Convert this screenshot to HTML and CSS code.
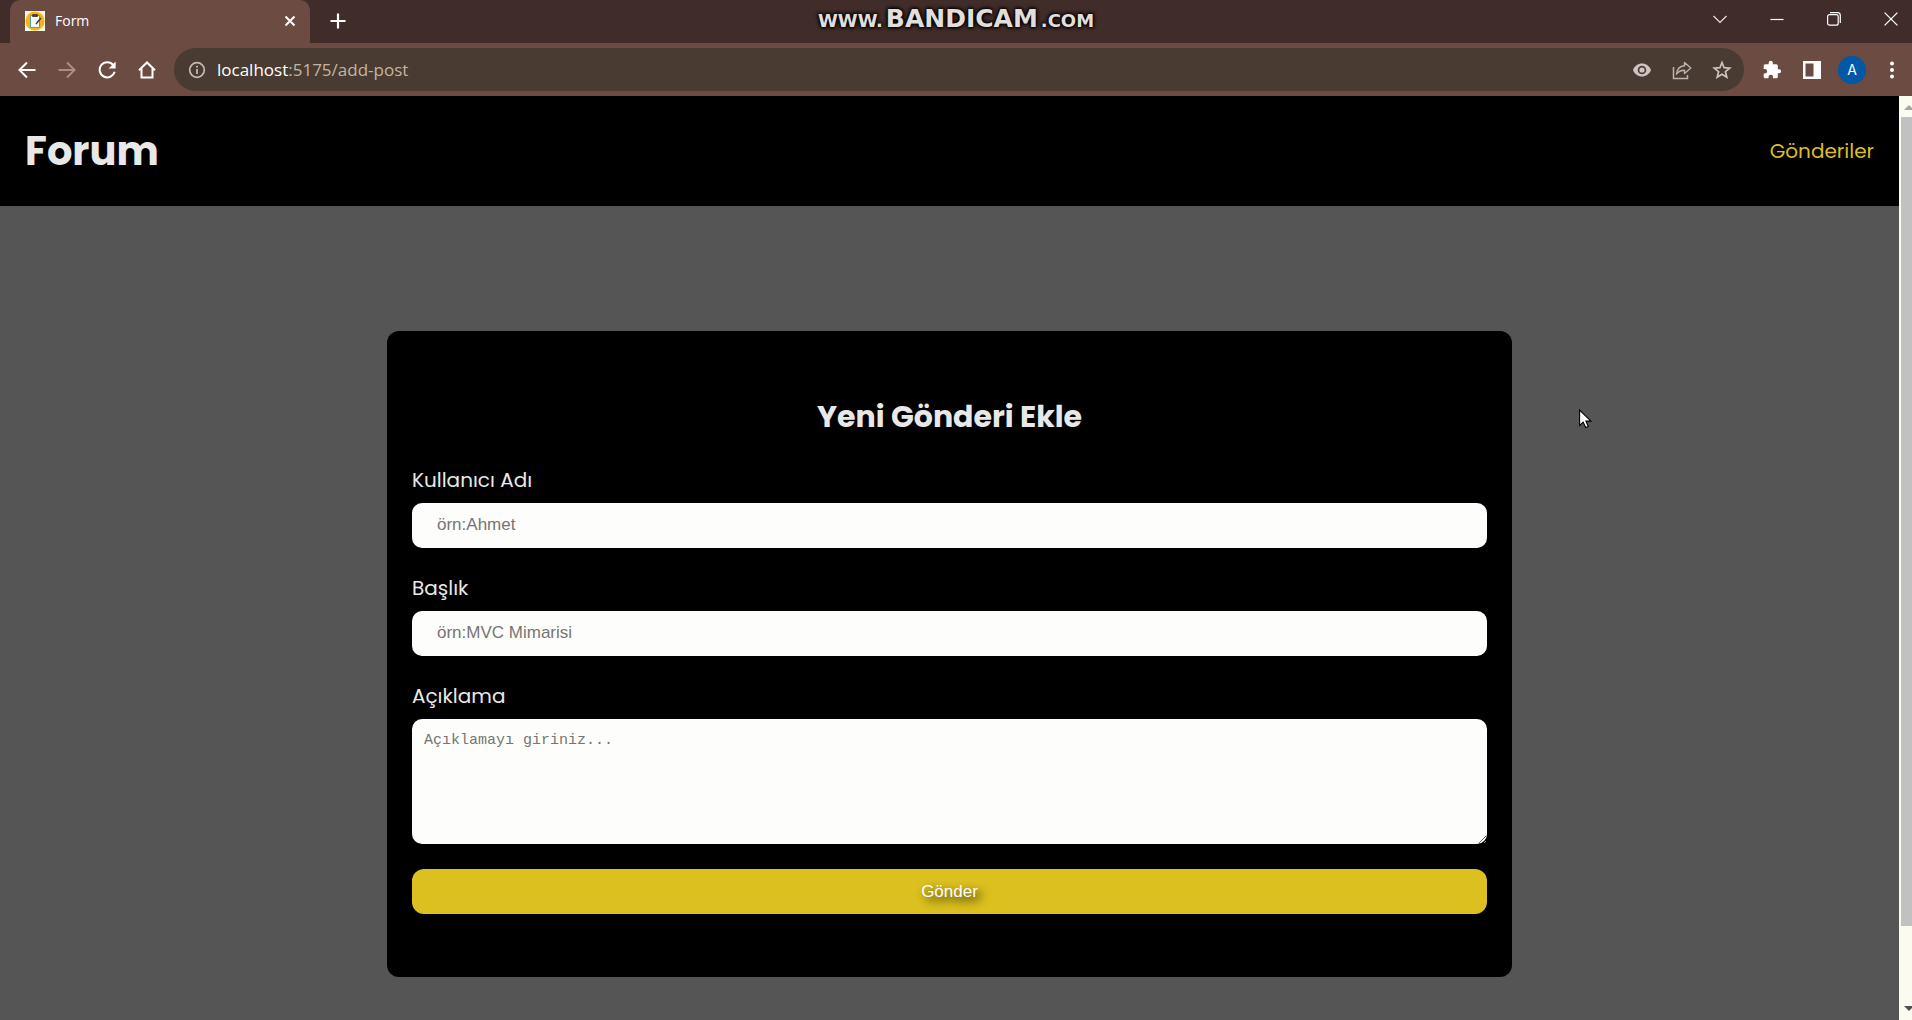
FILE: index.html
```html
<!DOCTYPE html>
<html lang="tr">
<head>
<meta charset="utf-8">
<meta name="viewport" content="width=device-width, initial-scale=1">
<title>Form</title>
<link rel="stylesheet" href="styles.css">
</head>
<body>
<div class="browser">
  <div class="tab-strip">
    <div class="tab">
      <svg class="favicon" width="20" height="20" viewBox="0 0 20 20" aria-hidden="true">
        <rect width="20" height="20" fill="#fff8e6"/>
        <circle cx="10" cy="10" r="9.6" fill="#f8b414"/>
        <rect x="5" y="4" width="10" height="13" rx="1" fill="#56a59a"/>
        <rect x="6" y="5" width="8" height="11" fill="#f4fbff"/>
        <rect x="7" y="3" width="6" height="3" rx="1" fill="#494637"/>
        <path d="M11 13l5-6" stroke="#3c4548" stroke-width="1.5"/>
      </svg>
      <span class="tab-title">Form</span>
      <button class="icon-button tab-close" type="button" aria-label="Sekmeyi kapat">
        <svg width="12" height="12" viewBox="0 0 12 12"><path d="M1.5 1.5l9 9M10.5 1.5l-9 9" stroke="#fff" stroke-width="2"/></svg>
      </button>
    </div>
    <button class="icon-button new-tab" type="button" aria-label="Yeni sekme">
      <svg width="16" height="16" viewBox="0 0 16 16"><path d="M8 .5v15M.5 8h15" stroke="#fff" stroke-width="2.2"/></svg>
    </button>
    <div class="watermark" lang="en"><small>www.</small><strong>Bandicam</strong><small>.com</small></div>
    <div class="window-controls">
      <button class="icon-button" type="button" aria-label="Sekme ara"><svg width="14" height="14" viewBox="0 0 14 14"><path d="M.5 4L7 10.5 13.500 4" fill="none" stroke="#eee3df" stroke-width="1.2"/></svg></button>
      <button class="icon-button" type="button" aria-label="Simge durumu"><svg width="14" height="14" viewBox="0 0 14 14"><path d="M.5 7.5h13" stroke="#fff" stroke-width="1.2"/></svg></button>
      <button class="icon-button" type="button" aria-label="Geri yükle"><svg width="14" height="14" viewBox="0 0 14 14"><g fill="none" stroke="#fff" stroke-width="1.2"><rect x=".6" y="2.6" width="10.6" height="10.6" rx="2"/><path d="M3 .7h7.500a2.800 2.800 0 0 1 2.800 2.800v7.500"/></g></svg></button>
      <button class="icon-button" type="button" aria-label="Kapat"><svg width="14" height="14" viewBox="0 0 14 14"><path d="M.6.6l12.800 12.800M13.400.6L.6 13.400" stroke="#fff" stroke-width="1.3"/></svg></button>
    </div>
  </div>

  <div class="toolbar">
    <div class="nav-buttons">
      <button class="icon-button" type="button" aria-label="Geri"><svg width="18" height="18" viewBox="0 0 18 18"><path d="M17.500 9H2M9 1.500L1.500 9 9 16.500" fill="none" stroke="#fff" stroke-width="2"/></svg></button>
      <button class="icon-button" type="button" aria-label="İleri"><svg width="18" height="18" viewBox="0 0 18 18"><path d="M.5 9H16M9 1.500L16.500 9 9 16.500" fill="none" stroke="#ab8f86" stroke-width="2"/></svg></button>
      <button class="icon-button" type="button" aria-label="Yenile"><svg width="18" height="18" viewBox="0 0 18 18"><path d="M15.200 4A7.600 7.600 0 1 0 16.600 10.800" fill="none" stroke="#fff" stroke-width="2"/><path d="M17.600.6v7H10.600z" fill="#fff"/></svg></button>
      <button class="icon-button" type="button" aria-label="Ana sayfa"><svg width="18" height="18" viewBox="0 0 18 18"><path d="M1 9.200L9 1.500l8 7.700M3.500 7.500V16.500h11V7.500" fill="none" stroke="#fff" stroke-width="2"/></svg></button>
    </div>
    <div class="omnibox">
      <svg width="18" height="18" viewBox="0 0 18 18" aria-hidden="true"><circle cx="9" cy="9" r="7.3" fill="none" stroke="#c3bab5" stroke-width="1.7"/><path d="M9 8v5M9 4.700v1.800" stroke="#c3bab5" stroke-width="1.8"/></svg>
      <div class="address"><span class="host">localhost</span>:5175/add-post</div>
      <div class="omnibox-actions">
        <button class="icon-button" type="button" aria-label="Göz at"><svg width="20" height="20" viewBox="0 0 20 20"><path fill="#cfc4c2" fill-rule="evenodd" d="M1 10C2.500 6 6 3.500 10 3.500S17.500 6 19 10c-1.500 4-5 6.500-9 6.500S2.500 14 1 10zm9-4.300a4.300 4.300 0 1 0 0 8.600 4.300 4.300 0 0 0 0-8.600z"/><circle cx="10" cy="10" r="2.6" fill="#cfc4c2"/></svg></button>
        <button class="icon-button" type="button" aria-label="Paylaş"><svg width="20" height="20" viewBox="0 0 20 20"><path d="M1.500 7v11.500h14V15" fill="none" stroke="#bdb2ae" stroke-width="1.5"/><path d="M12.500 2.500L18.800 8l-6.300 5.500v-3.300c-4 0-6.300 1.300-8 4 .4-4.500 3-8 8-8.400z" fill="none" stroke="#bdb2ae" stroke-width="1.4" stroke-linejoin="round"/></svg></button>
        <button class="icon-button" type="button" aria-label="Yer işareti"><svg width="20" height="20" viewBox="0 0 20 20"><path d="M10 2.500l2.100 5.200 5.600.4-4.300 3.600 1.400 5.500-4.800-3-4.800 3 1.400-5.500-4.300-3.600 5.600-.4z" fill="none" stroke="#cfc4c2" stroke-width="1.7"/></svg></button>
      </div>
    </div>
    <div class="toolbar-actions">
      <button class="icon-button" type="button" aria-label="Uzantılar"><svg width="20" height="20" viewBox="0 0 24 24"><path fill="#fff" d="M20.500 11H19V7a2 2 0 0 0-2-2h-4V3.500a2.500 2.500 0 0 0-5 0V5H4a2 2 0 0 0-2 2v3.800h1.500a2.700 2.700 0 0 1 0 5.400H2V20a2 2 0 0 0 2 2h3.800v-1.500a2.700 2.700 0 0 1 5.400 0V22H17a2 2 0 0 0 2-2v-4h1.500a2.500 2.500 0 0 0 0-5z"/></svg></button>
      <button class="icon-button" type="button" aria-label="Yan panel"><svg width="20" height="20" viewBox="0 0 20 20"><path fill="#fff" fill-rule="evenodd" d="M1 1h18v18H1zM3.500 3.500v13h8v-13z"/></svg></button>
      <button class="icon-button avatar" type="button" aria-label="Profil">A</button>
      <button class="icon-button" type="button" aria-label="Menü"><svg width="20" height="20" viewBox="0 0 20 20" fill="#fff"><circle cx="10" cy="3.5" r="2"/><circle cx="10" cy="10" r="2"/><circle cx="10" cy="16.5" r="2"/></svg></button>
    </div>
  </div>

  <div class="viewport">
    <div class="page">
      <header class="site-header">
        <h1 class="logo">Forum</h1>
        <nav><a class="nav-link" href="#posts">Gönderiler</a></nav>
      </header>
      <main class="content">
        <form class="post-form">
          <h2 class="form-title">Yeni Gönderi Ekle</h2>
          <div class="field">
            <label for="user">Kullanıcı Adı</label>
            <input class="control" id="user" type="text" placeholder="örn:Ahmet">
          </div>
          <div class="field">
            <label for="title">Başlık</label>
            <input class="control" id="title" type="text" placeholder="örn:MVC Mimarisi">
          </div>
          <div class="field">
            <label for="text">Açıklama</label>
            <textarea class="control message" id="text" placeholder="Açıklamayı giriniz..."></textarea>
          </div>
          <button class="submit" type="submit">Gönder</button>
        </form>
      </main>
      <svg class="pointer" width="14" height="20" viewBox="0 0 14 20" aria-hidden="true"><path d="M.6 1v15.500l3.600-3.400 2.500 5.400 2.600-1.100-2.400-5.300h5z" fill="#fff" stroke="#000" stroke-width="1.1"/></svg>
    </div>
    <div class="scrollbar" aria-hidden="true">
      <div class="arrow arrow-up"></div>
      <div class="thumb"></div>
      <div class="arrow arrow-down"></div>
    </div>
  </div>
</div>
</body>
</html>
```
FILE: styles.css
```css
* { box-sizing: border-box; }

body {
  margin: 0;
  background: #555555;
  font-family: Poppins, Inter, sans-serif;
  color: #e8e8e8;
}

h1, h2 { margin: 0; }

svg { display: block; }

.browser {
  display: flex;
  flex-direction: column;
  height: 100vh;
  overflow: hidden;
}

.icon-button {
  display: flex;
  align-items: center;
  justify-content: center;
  padding: 0;
  border: 0;
  background: none;
  color: #fff;
}

/* Tab strip */
.tab-strip {
  position: relative;
  display: flex;
  flex: none;
  height: 43px;
  padding-left: 10px;
  background: #402c29;
}

.tab {
  display: flex;
  align-items: center;
  gap: 10px;
  width: 300px;
  padding: 0 14px 2px 15px;
  border-radius: 10px 10px 0 0;
  background: #6b4b42;
}

.tab-title {
  flex: 1;
  font: 14px/20px "Open Sans", sans-serif;
  color: #fff;
}

.new-tab { padding: 0 20px 2px; }

.watermark {
  position: absolute;
  top: 5px;
  left: 50%;
  display: flex;
  align-items: baseline;
  gap: 3px;
  transform: translateX(-50%);
  font: bold 25px/27px "DejaVu Sans", sans-serif;
  color: #e2dedb;
  text-transform: uppercase;
  text-shadow: 0 0 3px #000, 0 0 4px #000, 0 0 4px #000;
}

.watermark small { font-size: 18px; }

.window-controls {
  display: flex;
  align-items: center;
  gap: 43px;
  margin-left: auto;
  padding: 0 14px 6px 0;
}

/* Toolbar */
.toolbar {
  display: flex;
  flex: none;
  align-items: center;
  gap: 18px;
  height: 53px;
  padding: 0 10px 0 18px;
  background: #6b4b42;
}

.nav-buttons {
  display: flex;
  gap: 22px;
}

.omnibox {
  display: flex;
  flex: 1;
  align-items: center;
  gap: 11px;
  height: 43px;
  padding: 0 12px 0 14px;
  border-radius: 22px;
  background: #493b31;
}

.address {
  flex: 1;
  font: 17px/24px "Open Sans", sans-serif;
  color: #c3b5a2;
}

.host { color: #fff; }

.omnibox-actions,
.toolbar-actions {
  display: flex;
  align-items: center;
  gap: 20px;
}

.avatar {
  width: 28px;
  height: 28px;
  margin: 0 -4px;
  border-radius: 50%;
  background: #0058a6;
  font: 14px/20px Inter, sans-serif;
}

/* Page */
.viewport {
  display: flex;
  flex: 1;
  min-height: 0;
}

.page {
  position: relative;
  flex: 1;
  overflow: hidden;
}

.site-header {
  display: flex;
  align-items: center;
  justify-content: space-between;
  height: 110px;
  padding: 0 25px;
  background: #000;
}

.logo { font-size: 40px; }

.nav-link {
  font-size: 20px;
  color: #dcbf20;
  text-decoration: none;
}

.content {
  display: flex;
  justify-content: center;
  padding: 125px 25px;
}

.post-form {
  display: flex;
  flex-direction: column;
  gap: 25px;
  width: 1125px;
  padding: 63px 25px;
  border-radius: 12px;
  background: #000;
}

.form-title {
  font-size: 30px;
  line-height: 46px;
  text-align: center;
}

.field {
  display: flex;
  flex-direction: column;
  gap: 8px;
}

.field label {
  font-size: 20px;
  line-height: 30px;
}

.control {
  width: 100%;
  height: 45px;
  padding: 0 25px 2px;
  border: 0;
  border-radius: 10px;
  background: #fdfdfb;
  font: 17px/20px "Liberation Sans", Arial, sans-serif;
}

.control::placeholder { color: #757575; }

.message {
  height: 125px;
  padding: 12px;
  font: 15px/20px Consolas, "Liberation Mono", monospace;
  resize: vertical;
}

.submit {
  height: 45px;
  border: 0;
  border-radius: 12px;
  background: #dcc020;
  font: 17px/20px "Liberation Sans", Arial, sans-serif;
  color: #fff;
  text-shadow: 4px 4px 10px #000;
}

.pointer {
  position: absolute;
  top: 313px;
  right: 306px;
}

/* Scrollbar */
.scrollbar {
  display: flex;
  flex: none;
  flex-direction: column;
  align-items: flex-end;
  width: 13px;
  background: #fbfbf0;
}

.arrow {
  flex: none;
  width: 8px;
  height: 5px;
}

.arrow-up {
  margin: 9px 0 7px;
  background: #a3a3a3;
  clip-path: polygon(0 100%, 5px 0, 100% 60%, 100% 100%);
}

.thumb {
  flex: 1;
  width: 11px;
  margin-bottom: 80px;
  background: #c1c1c1;
}

.arrow-down {
  margin-bottom: 9px;
  background: #505050;
  clip-path: polygon(0 0, 100% 0, 100% 40%, 5px 100%);
}
```
